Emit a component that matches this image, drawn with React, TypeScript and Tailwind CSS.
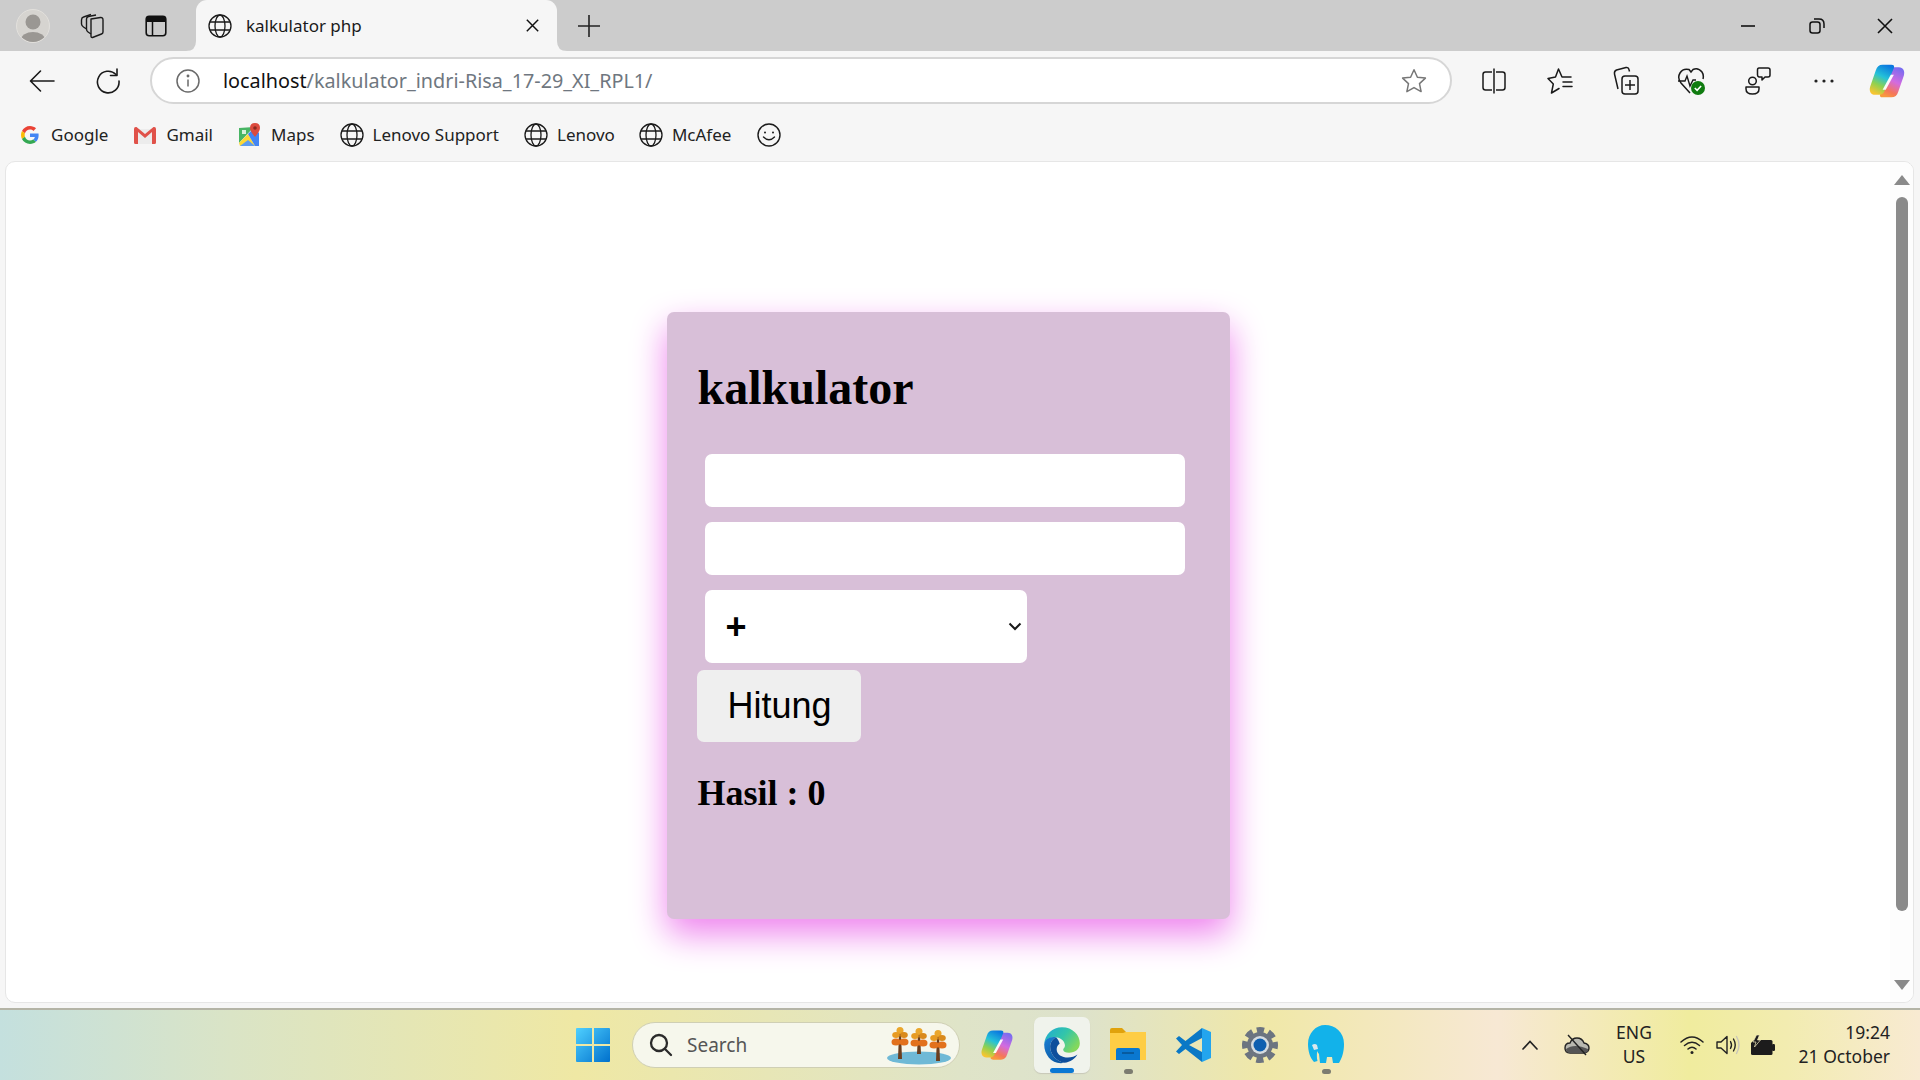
import React from 'react';

const ui = "font-['Noto_Sans',sans-serif]";

const Globe: React.FC<{ size?: number }> = ({ size = 24 }) => (
    <svg width={size} height={size} viewBox="0 0 24 24" fill="none" stroke="#1a1a1a" strokeWidth="1.3">
        <circle cx="12" cy="12" r="11" />
        <ellipse cx="12" cy="12" rx="5" ry="11" />
        <path d="M2 8h20M2 16h20" />
    </svg>
);

const Avatar = () => (
    <svg width="34" height="34" viewBox="0 0 34 34">
        <defs>
            <clipPath id="avatar-clip"><circle cx="17" cy="17" r="16" /></clipPath>
        </defs>
        <circle cx="17" cy="17" r="16.5" fill="#d6d4d0" stroke="#e2e0dc" />
        <g clipPath="url(#avatar-clip)" fill="#9a9793">
            <circle cx="17" cy="13" r="7.5" />
            <ellipse cx="17" cy="31" rx="12" ry="8" />
        </g>
    </svg>
);

const TabStackIcon = () => (
    <svg width="26" height="26" viewBox="0 0 26 26" fill="none" stroke="#1a1a1a" strokeWidth="1.4" strokeLinejoin="round">
        <path d="M12 6 L21.5 4.5 Q24 4.3 24 7 V19 Q24 20.5 22.5 21 L13.5 24.5 Q12 24.8 12 23 Z" />
        <path d="M12 21 L9 19 Q7.5 18 7.5 16 V6 Q7.5 4 9.5 3.5 L17 2" />
        <path d="M7.5 16 L4.5 14 Q2.5 12.5 2.5 11 V7 Q2.5 4.5 4.5 4 L12 1.5" />
    </svg>
);

const VerticalTabsIcon = () => (
    <svg width="22" height="22" viewBox="0 0 22 22" fill="none">
        <rect x="1.2" y="1.2" width="19.6" height="19.6" rx="3" stroke="#111" strokeWidth="1.6" />
        <path d="M1 4a3 3 0 0 1 3-3h14a3 3 0 0 1 3 3v3H1z" fill="#111" />
        <path d="M7.5 7v14" stroke="#111" strokeWidth="1.5" />
    </svg>
);

const BackIcon = () => (
    <svg width="26" height="24" viewBox="0 0 26 24" fill="none" stroke="#1a1a1a" strokeWidth="1.6" strokeLinecap="round" strokeLinejoin="round">
        <path d="M25 12H2M11.5 2 1.5 12l10 10" />
    </svg>
);

const ReloadIcon = () => (
    <svg width="26" height="26" viewBox="0 0 26 26" fill="none" stroke="#1a1a1a" strokeWidth="1.6" strokeLinecap="round" strokeLinejoin="round">
        <path d="M21 6.5A10.8 10.8 0 1 0 24 13" />
        <path d="M22 1v6.5h-6.5" />
    </svg>
);

const InfoIcon = () => (
    <svg width="24" height="24" viewBox="0 0 24 24" fill="none" stroke="#6a6a6a" strokeWidth="1.5">
        <circle cx="12" cy="12" r="11" />
        <path d="M12 10.5v7" />
        <circle cx="12" cy="7" r="0.7" fill="#6a6a6a" />
    </svg>
);

const StarIcon = () => (
    <svg width="26" height="26" viewBox="0 0 26 26" fill="none" stroke="#777" strokeWidth="1.5" strokeLinejoin="round">
        <path d="M13 1.8l3.4 7.4 8 .9-5.9 5.5 1.6 8-7.1-4-7.1 4 1.6-8-5.9-5.5 8-.9z" />
    </svg>
);

const SplitIcon = () => (
    <svg width="24" height="28" viewBox="0 0 24 28" fill="none" stroke="#1a1a1a" strokeWidth="1.5" strokeLinejoin="round">
        <path d="M10 5H3.5Q1 5 1 7.5v13Q1 23 3.5 23H10" />
        <path d="M14 5h6.5Q23 5 23 7.5v13q0 2.5-2.5 2.5H14" />
        <path d="M12 1.5v25" />
    </svg>
);

const FavoritesIcon = () => (
    <svg width="26" height="28" viewBox="0 0 26 28" fill="none" stroke="#1a1a1a" strokeWidth="1.5" strokeLinejoin="round" strokeLinecap="round">
        <path d="M12 21.5 4.5 26l1.8-9L1 11.500l7.500-1.500L11.500 2l3.500 8h9" />
        <path d="M16 15h9M16 19.500h9" />
    </svg>
);

const CollectionsIcon = () => (
    <svg width="26" height="30" viewBox="0 0 26 30" fill="none" stroke="#1a1a1a" strokeWidth="1.5" strokeLinejoin="round">
        <path d="M5 23 1.5 8Q1 5 3.5 4L13 1.5q2.5-.5 3 2l.5 2" />
        <rect x="9" y="10" width="16" height="18" rx="3" />
        <path d="M17 14v10M12 19h10" />
    </svg>
);

const HealthIcon = () => (
    <svg width="30" height="30" viewBox="0 0 30 30" fill="none">
        <path d="M13 27 4 17Q0 12 3 7t9-3.5L14 6l2-2.5Q21 1 25 6q2 3 1 7" stroke="#1a1a1a" strokeWidth="1.5" />
        <path d="M1 15h7l2-5 3 10 3-6h3" stroke="#1a1a1a" strokeWidth="1.4" />
        <circle cx="21" cy="22" r="7" fill="#107c10" />
        <path d="M17.8 22l2.3 2.3 4-4.3" stroke="#fff" strokeWidth="1.6" />
    </svg>
);

const PeopleIcon = () => (
    <svg width="26" height="30" viewBox="0 0 26 30" fill="none" stroke="#1a1a1a" strokeWidth="1.5" strokeLinejoin="round">
        <circle cx="7.5" cy="15" r="3.8" />
        <path d="M1 21h13v2q0 5-6.5 5T1 23z" />
        <path d="M14 2h9q2 0 2 2v5q0 2-2 2h-3l-3 3v-3h-3q-1.500-.5-1.500-2V4q0-2 1.500-2z" />
    </svg>
);

const CopilotIcon: React.FC<{ size: number; id: string }> = ({ size, id }) => (
    <svg width={size} height={size} viewBox="0 0 32 32">
        <defs>
            <linearGradient id={`${id}-a`} x1="0.7" y1="0" x2="0.3" y2="1">
                <stop offset="0" stopColor="#0a78e0" />
                <stop offset="0.4" stopColor="#25c2d8" />
                <stop offset="0.7" stopColor="#8fd14f" />
                <stop offset="1" stopColor="#f7c531" />
            </linearGradient>
            <linearGradient id={`${id}-b`} x1="0.7" y1="0" x2="0.3" y2="1">
                <stop offset="0" stopColor="#7a6cf0" />
                <stop offset="0.45" stopColor="#d36be0" />
                <stop offset="0.8" stopColor="#f5765a" />
                <stop offset="1" stopColor="#f89a3c" />
            </linearGradient>
        </defs>
        <path d="M19.500 29h-7c-2 0-2.500-1-2-2.500L18 8c1-2.500 2.500-3 4-3h3.500c3.500 0 5 3 4 6.500l-4.500 13c-1 3-2.500 4.500-5.500 4.500z" fill={`url(#${id}-b)`} />
        <path d="M12.500 3h7c2 0 2.500 1 2 2.500L14 24c-1 2.500-2.500 3-4 3H6.500c-3.500 0-5-3-4-6.500l4.500-13C8 4.500 9.500 3 12.500 3z" fill={`url(#${id}-a)`} />
        <path d="M19 11h2.500L15 23h-2.500z" fill="#fff" opacity="0.95" />
    </svg>
);

const MinimizeIcon = () => (
    <svg width="16" height="16" viewBox="0 0 16 16" stroke="#111" strokeWidth="1.6"><path d="M1 8h14" /></svg>
);

const RestoreIcon = () => (
    <svg width="16" height="18" viewBox="0 0 16 18" fill="none" stroke="#111" strokeWidth="1.5">
        <rect x="1" y="5" width="10" height="11" rx="2.500" />
        <path d="M5 2h5q5 0 5 5v4" />
    </svg>
);

const CloseIcon: React.FC<{ size: number; width?: number }> = ({ size, width = 1.5 }) => (
    <svg width={size} height={size} viewBox="0 0 16 16" stroke="#111" strokeWidth={width}>
        <path d="M1 1l14 14M15 1 1 15" />
    </svg>
);

const GoogleIcon = () => (
    <svg width="18" height="18" viewBox="0 0 48 48">
        <path fill="#EA4335" d="M24 9.500c3.540 0 6.710 1.220 9.210 3.600l6.850-6.850C35.900 2.380 30.470 0 24 0 14.620 0 6.510 5.380 2.560 13.220l7.980 6.190C12.430 13.720 17.740 9.500 24 9.500z" />
        <path fill="#4285F4" d="M46.980 24.550c0-1.570-.15-3.090-.38-4.550H24v9.020h12.940c-.58 2.960-2.260 5.480-4.780 7.180l7.730 6c4.510-4.180 7.090-10.360 7.090-17.650z" />
        <path fill="#FBBC05" d="M10.530 28.590c-.48-1.450-.76-2.990-.76-4.590s.27-3.140.76-4.590l-7.980-6.190C.92 16.460 0 20.120 0 24c0 3.880.92 7.540 2.560 10.780l7.970-6.190z" />
        <path fill="#34A853" d="M24 48c6.480 0 11.930-2.130 15.890-5.810l-7.730-6c-2.150 1.450-4.920 2.300-8.160 2.300-6.260 0-11.570-4.220-13.470-9.910l-7.980 6.190C6.510 42.620 14.620 48 24 48z" />
    </svg>
);

const GmailIcon = () => (
    <svg width="24" height="18" viewBox="0 0 24 18">
        <path d="M2 3h20v13q0 2-2 2H4q-2 0-2-2z" fill="#ececec" />
        <path d="M1 16.500V3q0-2.500 2.500-2L12 8l8.500-7Q23 .5 23 3v13.500q0 1.500-1.500 1.500H19V6l-7 6-7-6v12H2.500Q1 18 1 16.500z" fill="#e0524a" />
    </svg>
);

const MapsIcon = () => (
    <svg width="24" height="24" viewBox="0 0 24 24">
        <path d="M1 5 16 4 1 20z" fill="#48b564" />
        <path d="M1 20 10 11l7 12H2z" fill="#fdd835" />
        <path d="M10 11l6-6 5 5v13h-4z" fill="#4285f4" />
        <path d="M2 23l8-6 7 6z" fill="#5c9cf0" />
        <path d="M17 0q5 0 5 5 0 3-5 9-5-6-5-9 0-5 5-5z" fill="#dc4b3e" />
        <circle cx="17" cy="5" r="1.800" fill="#8a2a20" />
        <rect x="4" y="7" width="4" height="4" fill="#d8f0d8" />
    </svg>
);

const SmileIcon = () => (
    <svg width="24" height="24" viewBox="0 0 24 24" fill="none" stroke="#1a1a1a" strokeWidth="1.4">
        <circle cx="12" cy="12" r="11" />
        <circle cx="8" cy="9.500" r="1" fill="#1a1a1a" stroke="none" />
        <circle cx="16" cy="9.500" r="1" fill="#1a1a1a" stroke="none" />
        <path d="M6.500 14q5.500 5.500 11 0" strokeLinecap="round" />
    </svg>
);

const WindowsIcon = () => (
    <svg width="36" height="36" viewBox="0 0 36 36">
        <defs>
            <linearGradient id="win-g" x1="0" y1="0" x2="1" y2="1">
                <stop offset="0" stopColor="#4fd0ff" />
                <stop offset="1" stopColor="#0070cc" />
            </linearGradient>
        </defs>
        <path d="M1 2q0-1 1-1h15v16H1zM19 1h15q1 0 1 1v15H19zM1 19h16v16H2q-1 0-1-1zM19 19h16v15q0 1-1 1H19z" fill="url(#win-g)" />
    </svg>
);

const SearchGlass = () => (
    <svg width="24" height="24" viewBox="0 0 24 24" fill="none" stroke="#2b2b2b" strokeWidth="2.300" strokeLinecap="round">
        <circle cx="10" cy="10" r="8" />
        <path d="M16 16l6 6" />
    </svg>
);

const Tree: React.FC<{ x: number; y: number; h: number }> = ({ x, y, h }) => (
    <g>
        <path d={`M${x - 2} ${y + h}h4l-1.200-${h}h-1.600z`} fill="#6b3e1e" />
        <circle cx={x} cy={y + 2.500} r="3.500" fill="#eaa62c" />
        <ellipse cx={x - 4} cy={y + 7} rx="3.800" ry="3" fill="#e79b22" />
        <ellipse cx={x + 4} cy={y + 7} rx="3.800" ry="3" fill="#d98a1c" />
        <ellipse cx={x - 4} cy={y + 14} rx="4.500" ry="3.500" fill="#e2711c" />
        <ellipse cx={x + 4} cy={y + 14} rx="4.500" ry="3.500" fill="#e2711c" />
    </g>
);

const TreesArt = () => (
    <svg width="68" height="40" viewBox="0 0 68 40">
        <ellipse cx="34" cy="33" rx="32" ry="6.500" fill="#6fb9d6" />
        <Tree x={15} y={3} h={31} />
        <Tree x={34} y={4} h={25} />
        <Tree x={53} y={6} h={30} />
    </svg>
);

const EdgeIcon = () => (
    <svg width="38" height="38" viewBox="0 0 32 32">
        <defs>
            <linearGradient id="edge-a" x1="0" y1="0" x2="1" y2="0.600">
                <stop offset="0" stopColor="#1ea8d8" />
                <stop offset="0.55" stopColor="#33c6a8" />
                <stop offset="1" stopColor="#84d85c" />
            </linearGradient>
            <linearGradient id="edge-b" x1="0" y1="0" x2="0.600" y2="1">
                <stop offset="0" stopColor="#1a7fd4" />
                <stop offset="1" stopColor="#0c59a4" />
            </linearGradient>
        </defs>
        <path d="M1 15.500C1.500 7 8 1 16 1c9 0 15 6.500 15 13.500 0 5-4 8-9 8-3 0-5-1-5-2.500 0-1 1.500-1.500 1.500-3.500 0-3-3-7-8.500-7C5 9.500 1.500 12 1 15.500z" fill="url(#edge-a)" />
        <path d="M1 15.500C1.500 11 6 8.500 11 9.500c-3 1.500-5 4.500-5 8 0 6 5 12.500 12 13.500-1 .2-2 .3-3 .3C7 31.300 1 24 1 15.500z" fill="url(#edge-b)" />
        <path d="M11 9.500c-3 1.500-5 4.500-5 8 0 6 5 12.500 12 13.500 5-.5 9-3.500 11-7-2 1.500-5 2.500-8 2.500-5 0-9.500-2.500-9.500-7 0-2 1-3.500 2.500-4.500C13.500 13 12.500 11 11 9.500z" fill="#0e4f9c" />
    </svg>
);

const FolderIcon = () => (
    <svg width="36" height="34" viewBox="0 0 36 34">
        <path d="M0 2q0-2 2-2h10l4 4h20v6H0z" fill="#e0a20c" />
        <path d="M0 5h13l3-1h20v28H0z" fill="#fecd45" />
        <path d="M6 22q0-2 2-2h20q2 0 2 2v10H6z" fill="#0a78d0" />
        <path d="M12 25h12" stroke="#06497f" strokeWidth="1.200" />
    </svg>
);

const VsCodeIcon = () => (
    <svg width="36" height="36" viewBox="0 0 36 36">
        <path d="M26 1 35 5v26l-9 4z" fill="#23a5ee" />
        <path d="M26 1v10L13 18l13 7v10L9.500 22 3 27l-3-2.500L6 18 0 11.500 3 9l6.500 5z" fill="#0a78c6" />
    </svg>
);

const GearIcon = () => (
    <svg width="36" height="36" viewBox="0 0 36 36">
        <circle cx="18" cy="18" r="14.500" fill="none" stroke="#6c7480" strokeWidth="7" strokeDasharray="7 4.380" strokeDashoffset="3.500" />
        <circle cx="18" cy="18" r="13" fill="#6c7480" />
        <circle cx="18" cy="18" r="9" fill="#d5dbe0" />
        <circle cx="18" cy="18" r="6.500" fill="#0f5fb0" />
    </svg>
);

const ElephantIcon = () => (
    <svg width="36" height="40" viewBox="0 0 36 40">
        <path d="M17 0c10 0 19 7 19 19 0 8-2 14-5 19h-6l-1-6h-5l-1 6h-6l-1-9c-1-1-1.500-2-2-3 0 3-.5 7 .5 10l-3.500 1C2 33 0 26 0 19 0 8 8 0 17 0z" fill="#12b2ea" />
        <path d="M4 20q3-2 5 0l1 4-4 1z" fill="#d8e8ee" />
    </svg>
);

const ChevronUp = () => (
    <svg width="18" height="12" viewBox="0 0 18 12" fill="none" stroke="#222" strokeWidth="1.700" strokeLinecap="round">
        <path d="M2 10l7-7.500L16 10" />
    </svg>
);

const CloudOffIcon = () => (
    <svg width="26" height="22" viewBox="0 0 26 22">
        <path d="M6 19q-5 0-5-5t5-5q2-5 7-5 5 0 7 5 5 1 5 5t-5 5z" fill="#b8b8b0" stroke="#222" strokeWidth="1.400" />
        <path d="M2 15q8-6 22 0v1q0 3-4 3H6q-4 0-4-4z" fill="#555" />
        <path d="M4 1l18 20" stroke="#222" strokeWidth="1.400" />
    </svg>
);

const WifiIcon = () => (
    <svg width="24" height="20" viewBox="0 0 24 20" fill="none" stroke="#222" strokeWidth="1.500" strokeLinecap="round">
        <path d="M1 7q11-10 22 0M4.500 10.500q7.500-6.500 15 0M8 14q4-3.500 8 0" />
        <circle cx="12" cy="17.500" r="1.500" fill="#222" stroke="none" />
    </svg>
);

const SpeakerIcon = () => (
    <svg width="24" height="22" viewBox="0 0 24 22" fill="none" stroke="#222" strokeWidth="1.400" strokeLinejoin="round" strokeLinecap="round">
        <path d="M1 8v6h4l6 5.500v-17L5 8z" />
        <path d="M14.500 7.500q2 3.500 0 7M17.500 5q3.500 6 0 12" />
        <path d="M20.500 2.500q5 8.500 0 17" stroke="#c8c6ba" />
    </svg>
);

const BatteryIcon = () => (
    <svg width="25" height="21" viewBox="0 0 25 21">
        <path d="M4 5h17q1.500 0 1.500 1.500v12q0 1.500-1.500 1.500H2.500Q1 20 1 18.500V8z" fill="#1c1c1c" />
        <rect x="22" y="9" width="3" height="7" rx="1.200" fill="#1c1c1c" />
        <path d="M6.500 0 3 7h3l-1.500 5L10.500 5H7.500l2-5z" fill="#1c1c1c" stroke="#f3ecc0" strokeWidth="0.700" />
    </svg>
);

const TabFoot: React.FC<{ side: 'left' | 'right' }> = ({ side }) => (
    <svg
        width="10"
        height="10"
        viewBox="0 0 10 10"
        className={side === 'left' ? 'absolute -left-[10px] bottom-0' : 'absolute -right-[10px] bottom-0 -scale-x-100'}
    >
        <path d="M10 0v10H0q10 0 10-10z" fill="#f6f6f6" />
    </svg>
);

const ToolButton: React.FC<{ children: React.ReactNode }> = ({ children }) => (
    <div className="flex h-full w-[66px] items-center justify-center">{children}</div>
);

const bookmarks = [
    { label: 'Google', icon: <GoogleIcon />, ml: 'ml-[18px]' },
    { label: 'Gmail', icon: <GmailIcon />, ml: 'ml-[25px]' },
    { label: 'Maps', icon: <MapsIcon />, ml: 'ml-[25px]' },
    { label: 'Lenovo Support', icon: <Globe />, ml: 'ml-[25px]' },
    { label: 'Lenovo', icon: <Globe />, ml: 'ml-[25px]' },
    { label: 'McAfee', icon: <Globe />, ml: 'ml-[24px]' },
];

const Browser = () => (
    <>
        {/* Tab strip */}
        <div className="flex h-[51px] items-center bg-[#cccccc]">
            <div className="ml-[16px] flex w-[46px] justify-start"><Avatar /></div>
            <div className="ml-[17px] flex w-[26px] justify-center"><TabStackIcon /></div>
            <div className="ml-[40px] flex w-[22px] justify-center"><VerticalTabsIcon /></div>
            <div className="relative ml-[29px] flex h-full w-[361px] items-center rounded-t-[11px] bg-[#f6f6f6] pl-[12px] pr-[18px]">
                <TabFoot side="left" />
                <TabFoot side="right" />
                <Globe />
                <span className={`${ui} ml-[14px] flex-1 text-[17px] text-[#1a1a1a]`}>kalkulator php</span>
                <CloseIcon size={13} width={1.8} />
            </div>
            <div className="ml-[21px]">
                <svg width="22" height="22" viewBox="0 0 22 22" stroke="#222" strokeWidth="1.600"><path d="M11 0v22M0 11h22" /></svg>
            </div>
            <div className="flex-1" />
            <div className="flex w-[69px] justify-center"><MinimizeIcon /></div>
            <div className="flex w-[69px] justify-center"><RestoreIcon /></div>
            <div className="flex w-[69px] justify-center pr-[2px]"><CloseIcon size={16} width={1.6} /></div>
        </div>

        {/* Address bar row */}
        <div className="flex h-[59px] items-center">
            <div className="ml-[29px] flex w-[26px] justify-center"><BackIcon /></div>
            <div className="ml-[40px] flex w-[26px] justify-center"><ReloadIcon /></div>
            <div className="ml-[29px] flex h-[47px] w-[1302px] items-center rounded-full border-2 border-[#d6d6d6] bg-white pl-[24px] pr-[23px]">
                <InfoIcon />
                <span className={`${ui} ml-[23px] flex-1 text-[19.8px] text-[#111]`}>
                    localhost<span className="text-[#6f7780]">/kalkulator_indri-Risa_17-29_XI_RPL1/</span>
                </span>
                <StarIcon />
            </div>
            <div className="ml-[9px] flex h-full">
                <ToolButton><SplitIcon /></ToolButton>
                <ToolButton><FavoritesIcon /></ToolButton>
                <ToolButton><CollectionsIcon /></ToolButton>
                <ToolButton><HealthIcon /></ToolButton>
                <ToolButton><PeopleIcon /></ToolButton>
                <ToolButton>
                    <svg width="20" height="4" viewBox="0 0 20 4" fill="#222">
                        <circle cx="2" cy="2" r="1.600" /><circle cx="10" cy="2" r="1.600" /><circle cx="18" cy="2" r="1.600" />
                    </svg>
                </ToolButton>
                <div className="flex h-full w-[60px] items-center justify-center"><CopilotIcon size={40} id="copilot-top" /></div>
            </div>
        </div>

        {/* Bookmarks */}
        <div className="flex h-[51px] items-center pb-[2px]">
            {bookmarks.map((b) => (
                <div key={b.label} className={`${b.ml} flex items-center`}>
                    <div className="flex w-[24px] justify-center">{b.icon}</div>
                    <span className={`${ui} ml-[9px] text-[17px] text-[#222]`}>{b.label}</span>
                </div>
            ))}
            <div className="ml-[26px]"><SmileIcon /></div>
        </div>
    </>
);

const Calculator = () => (
    <div className="flex h-[607px] w-[563px] flex-col items-start rounded-[7px] bg-[#d8bfd8] pl-[31px] pt-[52px] shadow-[0_15px_35px_violet]">
        <h1 className="font-['Liberation_Serif',serif] text-[48px] font-bold leading-none text-black">kalkulator</h1>
        <input type="text" className="ml-[7px] mt-[42px] h-[53px] w-[480px] rounded-[7px] bg-white" />
        <input type="text" className="ml-[7px] mt-[15px] h-[53px] w-[480px] rounded-[7px] bg-white" />
        <div className="relative ml-[7px] mt-[15px]">
            <select className="h-[73px] w-[322px] appearance-none rounded-[7px] bg-white pl-[21px] font-['Liberation_Sans',sans-serif] text-[36px] font-bold text-black">
                <option>+</option>
                <option>-</option>
                <option>*</option>
                <option>/</option>
            </select>
            <svg width="14" height="9" viewBox="0 0 14 9" fill="none" stroke="#1a1a1a" strokeWidth="2" className="pointer-events-none absolute right-[5px] top-[32px]">
                <path d="M1.500 1.500 7 7l5.500-5.500" />
            </svg>
        </div>
        <button className="ml-[-1px] mt-[7px] h-[72px] w-[164px] rounded-[7px] bg-[#efefef] pl-[2px] font-['Liberation_Sans',sans-serif] text-[36px] text-black">
            Hitung
        </button>
        <p className="mt-[33px] font-['Liberation_Serif',serif] text-[36px] font-bold leading-none text-black">Hasil : 0</p>
    </div>
);

const PagePanel = () => (
    <div className="ml-[5px] flex h-[842px] w-[1909px] overflow-hidden rounded-[10px] border border-[#e6e6e6] bg-white">
        <div className="flex flex-1 justify-center pt-[150px]">
            <Calculator />
        </div>
        <div className="flex w-[23px] flex-col items-center bg-[#fdfdfd] pb-[12px] pt-[13px]">
            <svg width="16" height="10" viewBox="0 0 16 10" fill="#8a8a8a"><path d="M8 0l8 10H0z" /></svg>
            <div className="mt-[12px] w-[12px] flex-1 rounded-full bg-[#8a8a8a]" />
            <div className="mt-[69px]" />
            <svg width="16" height="10" viewBox="0 0 16 10" fill="#8a8a8a"><path d="M8 10 16 0H0z" /></svg>
        </div>
    </div>
);

const Taskbar = () => (
    <div className={`${ui} mt-[5px] flex h-[72px] items-center border-t-2 border-[#b4b4a6] bg-[linear-gradient(90deg,#c4e0de_0%,#dae4c6_12%,#efe8a4_30%,#dfe4c8_50%,#dde2cc_56%,#f0e8a8_66%,#f7e8d4_78%,#f0ec9e_88%,#f2ecb0_93%,#f8ead2_100%)]`}>
        <div className="ml-[575px] flex w-[36px] justify-center"><WindowsIcon /></div>
        <div className="ml-[21px] flex h-[46px] w-[328px] items-center rounded-full border border-[#cfcfb4] bg-[#f6f7ec] pl-[16px] pr-[6px]">
            <SearchGlass />
            <span className="ml-[14px] flex-1 text-[19px] text-[#555]">Search</span>
            <TreesArt />
        </div>
        <div className="ml-[19px] flex w-[36px] justify-center"><CopilotIcon size={42} id="copilot-task" /></div>
        <div className="relative ml-[19px] flex h-[56px] w-[56px] items-center justify-center rounded-[7px] bg-[#f0f3ec] shadow-[0_1px_1px_#c8c8b8]">
            <EdgeIcon />
            <div className="absolute bottom-0 h-[5px] w-[24px] rounded-full bg-[#0a78d4]" />
        </div>
        <div className="relative ml-[20px] flex h-[56px] w-[36px] items-center justify-center">
            <FolderIcon />
            <div className="absolute -bottom-[1px] h-[5px] w-[9px] rounded-full bg-[#7c7c70]" />
        </div>
        <div className="ml-[30px] flex w-[36px] justify-center"><VsCodeIcon /></div>
        <div className="ml-[30px] flex w-[36px] justify-center"><GearIcon /></div>
        <div className="relative ml-[30px] flex h-[56px] w-[36px] items-center justify-center">
            <ElephantIcon />
            <div className="absolute -bottom-[1px] h-[5px] w-[9px] rounded-full bg-[#7c7c70]" />
        </div>
        <div className="ml-[177px] flex w-[18px] justify-center"><ChevronUp /></div>
        <div className="ml-[25px]"><CloudOffIcon /></div>
        <div className="ml-[20px] flex w-[48px] flex-col items-center pb-[2px] text-[17.5px] leading-[24px] text-[#222]">
            <span>ENG</span>
            <span>US</span>
        </div>
        <div className="ml-[22px]"><WifiIcon /></div>
        <div className="ml-[12px]"><SpeakerIcon /></div>
        <div className="ml-[10px]"><BatteryIcon /></div>
        <div className="ml-[12px] flex w-[103px] flex-col items-end pb-[2px] text-[17.5px] leading-[24px] text-[#222]">
            <span>19:24</span>
            <span className="whitespace-nowrap">21 October</span>
        </div>
    </div>
);

const App: React.FC = () => {
    return (
        <div className="flex h-[1080px] w-[1920px] flex-col overflow-hidden bg-[#f6f6f6]">
            <Browser />
            <PagePanel />
            <Taskbar />
        </div>
    );
};

export default App;
